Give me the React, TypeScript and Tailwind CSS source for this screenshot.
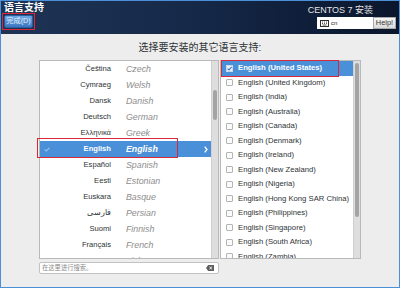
const languages: [string, string][] = [
  ['Čeština', 'Czech'],
  ['Cymraeg', 'Welsh'],
  ['Dansk', 'Danish'],
  ['Deutsch', 'German'],
  ['Ελληνικά', 'Greek'],
  ['English', 'English'],
  ['Español', 'Spanish'],
  ['Eesti', 'Estonian'],
  ['Euskara', 'Basque'],
  ['فارسی', 'Persian'],
  ['Suomi', 'Finnish'],
  ['Français', 'French'],
  ['Gaeilge', 'Irish'],
]

const locales = [
  'United States',
  'United Kingdom',
  'India',
  'Australia',
  'Canada',
  'Denmark',
  'Ireland',
  'New Zealand',
  'Nigeria',
  'Hong Kong SAR China',
  'Philippines',
  'Singapore',
  'South Africa',
  'Zambia',
  'Zimbabwe',
]

function KeyboardIcon() {
  return (
    <svg width="9" height="7" viewBox="0 0 9 7" className="shrink-0">
      <rect x="0.5" y="0.5" width="8" height="6" fill="none" stroke="#2e2e2e" />
      <path d="M2 2h1M4 2h1M6 2h1M2 3.5h1M4 3.5h1M6 3.5h1M2.5 5h4" stroke="#2e2e2e" strokeWidth="0.8" />
    </svg>
  )
}

function LanguageList() {
  return (
    <div className="h-[199px] flex border border-[#b9b9b9] bg-white">
      <div className="flex-1 overflow-hidden">
        {languages.map(([native, english]) => {
          const active = native === 'English'
          return (
            <div
              key={native}
              className={`h-[16px] flex items-center ${active ? 'bg-[#4a90d9] text-white' : ''}`}
            >
              <div className="w-[10px] flex justify-end">
                {active && (
                  <svg width="6" height="5" viewBox="0 0 6 5">
                    <path d="M0.6 2.6 L2.2 4 L5.4 0.8" fill="none" stroke="#9fbfe6" strokeWidth="1.2" />
                  </svg>
                )}
              </div>
              <span
                className={`w-[61px] text-right text-[7.6px] leading-none ${active ? 'font-bold' : 'text-[#2e3436]'}`}
              >
                {native}
              </span>
              <span
                className={`ml-[15px] flex-1 italic text-[8.8px] leading-none ${active ? 'font-bold' : 'text-[#8d8d8d]'}`}
              >
                {english}
              </span>
              {active && (
                <svg width="4" height="7" viewBox="0 0 4 7" className="mr-[3px]">
                  <path d="M0.7 0.7 L3 3.5 L0.7 6.3" fill="none" stroke="#fff" strokeWidth="1.3" />
                </svg>
              )}
            </div>
          )
        })}
      </div>
      <div className="w-[7px] bg-[#dedede] border-l border-[#cfcfcf] flex justify-center">
        <div className="mt-[29px] w-[4px] h-[30px] rounded-full bg-[#a4a4a4]" />
      </div>
    </div>
  )
}

function LocaleList() {
  return (
    <div className="w-[141px] h-[199px] flex border border-[#b9b9b9] bg-white">
      <div className="flex-1 overflow-hidden">
        {locales.map((loc, i) => {
          const active = i === 0
          return (
            <div
              key={loc}
              className={`h-[14.5px] flex items-center pl-[5px] gap-[5px] ${active ? 'bg-[#4a90d9] text-white' : 'text-[#2e3436]'}`}
            >
              {active ? (
                <svg width="7" height="7" viewBox="0 0 7 7" className="shrink-0">
                  <rect x="0.5" y="0.5" width="6" height="6" fill="#eef3fa" stroke="#c9d8ec" />
                  <path d="M1.6 3.6 L3 5 L5.6 1.8" fill="none" stroke="#3b6fae" strokeWidth="1.1" />
                </svg>
              ) : (
                <div className="w-[7px] h-[7px] shrink-0 border border-[#b4b4b4] rounded-[1px] bg-[#fafafa]" />
              )}
              <span className={`text-[7.7px] leading-none whitespace-nowrap ${active ? 'font-bold' : ''}`}>
                English ({loc})
              </span>
            </div>
          )
        })}
      </div>
      <div className="w-[7px] bg-[#dedede] border-l border-[#cfcfcf] flex justify-center">
        <div className="mt-[2px] w-[4px] h-[154px] rounded-full bg-[#a4a4a4]" />
      </div>
    </div>
  )
}

export default function App() {
  return (
    <div className="relative w-[400px] h-[288px] border border-[#4a8fd8] flex flex-col bg-[#ededed] overflow-hidden font-['Liberation_Sans','Noto_Sans_CJK_SC',sans-serif]">
      {/* header */}
      <div className="h-[33px] shrink-0 flex justify-between bg-linear-to-r from-[#1f3455] via-[#152848] to-[#0a162c]">
        <div className="flex flex-col pl-[3px] pt-[1px]">
          <div className="text-[10px] leading-[12px] font-bold text-white">语言支持</div>
          <div className="mt-[1px] w-[29px] h-[13px] flex items-center justify-center rounded-[2px] border border-[#2c5d9c] bg-linear-to-b from-[#6aa6e6] to-[#3a77c0] text-[7.2px] text-[#e6eef8]">
            完成(D)
          </div>
        </div>
        <div className="flex flex-col items-end pr-[3px] pt-[4px]">
          <div className="mr-[23px] text-[9px] leading-[10px] text-[#e4e4e4]">CENTOS 7 安装</div>
          <div className="mt-[2px] flex">
            <div className="w-[56px] h-[12px] bg-white flex items-center pl-[3px] gap-[2px]">
              <KeyboardIcon />
              <span className="text-[6px] leading-none text-[#222]">cn</span>
            </div>
            <div className="w-[23px] h-[12px] flex items-center justify-center border border-[#a9a9a9] bg-linear-to-b from-[#f7f7f7] to-[#dadada] text-[7.4px] text-[#333]">
              Help!
            </div>
          </div>
        </div>
      </div>

      {/* body */}
      <div className="flex-1 flex flex-col items-center">
        <div className="mt-[7px] text-[10px] leading-[14px] text-[#2e3436]">选择要安装的其它语言支持:</div>
        <div className="mt-[5px] flex gap-[1px]">
          <div className="w-[180px] flex flex-col">
            <LanguageList />
            <div className="mt-[3px] h-[12px] flex items-center justify-between pl-[2px] pr-[4px] rounded-[2px] border border-[#c2c2c2] bg-white">
              <span className="text-[6.3px] leading-none text-[#8a8a8a]">在这里进行搜索。</span>
              <svg width="8" height="6" viewBox="0 0 8 6">
                <path d="M2.2 0 H8 V6 H2.2 L0 3 Z" fill="#5d5d5d" />
                <path d="M3.6 1.6 L5.8 4.4 M5.8 1.6 L3.6 4.4" stroke="#fff" strokeWidth="0.9" />
              </svg>
            </div>
          </div>
          <LocaleList />
        </div>
      </div>

      {/* red annotation boxes */}
      <div className="absolute left-[1px] top-[12px] w-[33px] h-[17px] border-[1.5px] border-[#d9283a]" />
      <div className="absolute left-[36px] top-[137px] w-[141px] h-[20px] border-[1.5px] border-[#d9283a]" />
      <div className="absolute left-[220px] top-[59px] w-[118px] h-[17px] border-[1.5px] border-[#d9283a]" />
    </div>
  )
}
